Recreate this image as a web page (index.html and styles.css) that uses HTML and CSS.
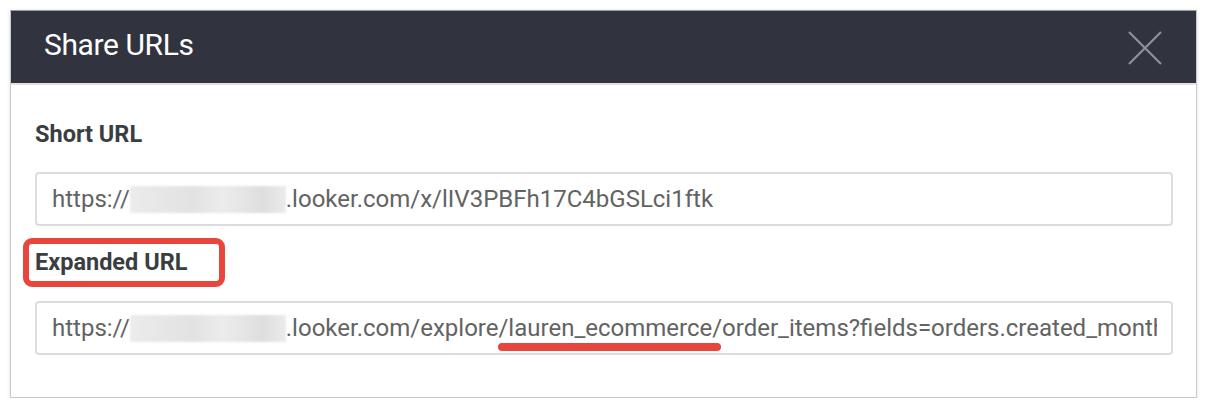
FILE: index.html
```html
<!DOCTYPE html>
<html>
<head>
<meta charset="utf-8">
<link rel="stylesheet" href="styles.css">
</head>
<body>
<div class="modal">
  <div class="modal-header">
    <h1 class="modal-title">Share URLs</h1>
    <svg class="close-icon" width="34" height="34" viewBox="0 0 34 34"><path d="M1 1 L33 33 M33 1 L1 33" stroke="#8e9099" stroke-width="2.2" fill="none"/></svg>
  </div>
  <div class="modal-body">
    <div class="field">
      <div class="label">Short URL</div>
      <div class="input"><div class="input-text"><span>https://</span><span class="blur"></span><span>.looker.com/x/lIV3PBFh17C4bGSLci1ftk</span></div></div>
    </div>
    <div class="field field-expanded">
      <div class="label label-boxed">Expanded URL</div>
      <div class="input"><div class="input-text"><span>https://</span><span class="blur"></span><span>.looker.com/explore</span><span class="mark">/lauren_ecommerce/</span><span>order_items?fields=orders.created_month</span></div></div>
    </div>
  </div>
</div>
</body>
</html>
```
FILE: styles.css
```css
* { box-sizing: border-box; }
html, body { margin: 0; padding: 0; background: #ffffff; }
body {
  padding: 10px 9px 0 10px;
  font-family: Roboto, "Liberation Sans", Arial, sans-serif;
}
.modal {
  width: 1187px;
  height: 388px;
  border: 1px solid #c9c9c9;
  border-top-color: #9a9ca3;
  box-shadow: 0 1px 4px rgba(0,0,0,0.12);
  background: #fff;
  display: flex;
  flex-direction: column;
}
.modal-header {
  height: 74px;
  flex: none;
  background: #31343f;
  border-bottom: 2px solid #e2e2e2;
  display: flex;
  align-items: center;
  justify-content: space-between;
  padding: 0 34px 0 33px;
}
.modal-title {
  margin: -6px 0 0 0;
  color: #ffffff;
  font-weight: 400;
  font-size: 30px;
  letter-spacing: -0.4px;
}
.close-icon { display: block; margin-top: 1px; }
.modal-body {
  padding: 35px 23px 0 24px;
  display: flex;
  flex-direction: column;
}
.field { display: flex; flex-direction: column; }
.label {
  font-weight: 700;
  font-size: 23.5px;
  color: #3a3d42;
  line-height: 28px;
  margin-bottom: 24px;
}
.field-expanded { margin-top: 12px; }
.label-boxed {
  align-self: flex-start;
  margin-left: -12px;
  margin-bottom: 14px;
  padding: 4px 32px 5px 6px;
  border: 6px solid #e8453c;
  border-radius: 9px;
}
.input {
  height: 54px;
  border: 2px solid #dcdcdc;
  border-radius: 4px;
  padding: 0 14px 0 15px;
  display: flex;
  align-items: stretch;
}
.input-text {
  flex: 1;
  min-width: 0;
  display: flex;
  align-items: center;
  white-space: nowrap;
  overflow: hidden;
  font-size: 24px;
  color: #636363;
}
.input-text span { flex: none; }
.blur {
  display: inline-block;
  width: 156px;
  height: 27px;
  background: linear-gradient(90deg, #ececec 0%, #e2e2e2 40%, #ececec 60%, #dedede 85%, #ebebeb 100%);
  filter: blur(1px);
}
.mark { position: relative; }
.mark::after {
  content: "";
  position: absolute;
  left: 0;
  right: 1px;
  bottom: -9px;
  height: 8px;
  border-radius: 4px;
  background: #e8453c;
}
```
